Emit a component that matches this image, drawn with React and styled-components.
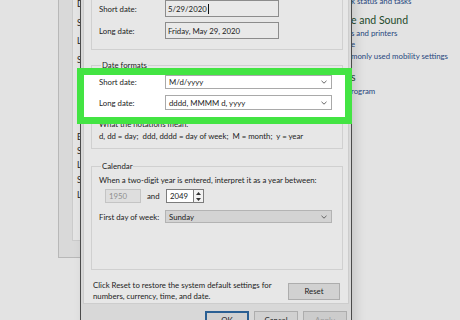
import React from "react";
import styled, { createGlobalStyle } from "styled-components";

const Global = createGlobalStyle`
  html, body { margin: 0; padding: 0; background: #e3e3e3; }
  #root { width: 460px; height: 320px; }
`;

const FONT = `Lato, "Open Sans", "Noto Sans", sans-serif`;

const Desktop = styled.div`
  position: relative;
  width: 460px;
  height: 320px;
  overflow: hidden;
  background: #e3e3e3;
  font-family: ${FONT};
  font-size: 7.8px;
  color: #1c1c1c;
`;

/* ---------- window behind, left (Region) ---------- */
const BackWindow = styled.div`
  position: absolute;
  left: 58px;
  top: -10px;
  width: 60px;
  height: 268px;
  background: #d9d9d9;
  border: 1px solid #b8b8b8;
  display: flex;
  padding-left: 13px;
  padding-bottom: 16px;
  box-sizing: border-box;
`;
const BackPanel = styled.div`
  flex: 1;
  background: #e5e5e5;
  border-left: 1px solid #cbcbcb;
  border-bottom: 1px solid #cbcbcb;
  padding: 8px 0 0 4px;
  display: flex;
  flex-direction: column;
  font-size: 8.5px;
`;
const BackLabel = styled.div`
  line-height: 11px;
  height: 11px;
  margin-bottom: ${(p) => p.$gap}px;
  white-space: nowrap;
`;

/* ---------- window behind, right (Control Panel) ---------- */
const CPanel = styled.div`
  position: absolute;
  left: 351px;
  top: -4px;
  display: flex;
  flex-direction: column;
  white-space: nowrap;
`;
const CPLink = styled.div`
  font-size: 7.8px;
  line-height: 11px;
  color: #27477e;
  margin-top: ${(p) => p.$mt || 0}px;
`;
const CPHead = styled.div`
  font-size: 10.5px;
  line-height: 16px;
  color: #234a2a;
  margin-top: ${(p) => p.$mt || 0}px;
`;

/* ---------- front dialog ---------- */
const Dialog = styled.div`
  position: absolute;
  left: 80px;
  top: -20px;
  width: 272px;
  height: 360px;
  box-sizing: border-box;
  z-index: 2;
  background: #d8d8d8;
  border-left: 1px solid #4b4b4b;
  border-right: 1px solid #4b4b4b;
  padding: 0 2px 0 2px;
  box-shadow: 4px 0 10px rgba(0, 0, 0, 0.12);
  display: flex;
  flex-direction: column;
`;

const TabPage = styled.div`
  background: #e7e7e7;
  border: 1px solid #cdcdcd;
  border-top: none;
  padding: 9px 5px 0 7px;
  height: 324px;
  box-sizing: border-box;
  display: flex;
  flex-direction: column;
`;

const Group = styled.fieldset`
  margin: ${(p) => p.$mt || 0}px 0 0 0;
  border: 1px solid #d0d0d0;
  padding: ${(p) => p.$pad};
  min-width: 0;
`;
const Legend = styled.legend`
  padding: 0 1px;
  margin-left: 2px;
  line-height: 10px;
`;

const FormatsBody = styled.div`
  position: relative;
`;

const Row = styled.div`
  position: relative;
  z-index: 1;
  display: flex;
  align-items: center;
  margin-top: ${(p) => p.$mt || 0}px;
`;
const Label = styled.div`
  width: 66px;
  flex: none;
  white-space: nowrap;
`;

const Field = styled.div`
  box-sizing: border-box;
  width: 114px;
  height: 17px;
  border: 1px solid #8c8c8c;
  background: #e9e9e9;
  padding-left: 2px;
  display: flex;
  align-items: center;
  white-space: nowrap;
`;
const Caret = styled.span`
  display: inline-block;
  width: 1px;
  height: 10px;
  background: #111;
  margin-left: 1px;
`;

const Combo = styled.div`
  box-sizing: border-box;
  width: 167px;
  height: ${(p) => p.$h}px;
  border: 1px solid ${(p) => (p.$gray ? "#b3b3b3" : "#a9a9a9")};
  background: ${(p) => (p.$gray ? "#d3d3d3" : "#ffffff")};
  padding: 0 4px 0 3px;
  display: flex;
  align-items: center;
  justify-content: space-between;
  white-space: nowrap;
`;

const Chevron = () => (
  <svg width="6" height="4" viewBox="0 0 6 4">
    <path d="M0.5 0.8 L3 3.2 L5.5 0.8" fill="none" stroke="#555" strokeWidth="0.9" />
  </svg>
);

const Highlight = styled.div`
  position: absolute;
  z-index: 0;
  left: -22px;
  top: -7px;
  width: 275px;
  height: 56px;
  box-sizing: border-box;
  border: 7px solid #43e443;
  background: #ffffff;
`;

const Text = styled.div`
  line-height: 12px;
  white-space: nowrap;
  margin-top: ${(p) => p.$mt || 0}px;
`;

const YearRow = styled.div`
  display: flex;
  align-items: center;
  margin-top: 3px;
  padding-left: 6px;
`;
const YearBox = styled.div`
  box-sizing: border-box;
  height: 14px;
  width: ${(p) => p.$w}px;
  border: 1px solid ${(p) => (p.$disabled ? "#c4c4c4" : "#7c7c7c")};
  background: ${(p) => (p.$disabled ? "#dedede" : "#ffffff")};
  color: ${(p) => (p.$disabled ? "#8f8f8f" : "#1c1c1c")};
  padding-left: 3px;
  display: flex;
  align-items: center;
`;
const And = styled.div`
  width: 25px;
  flex: none;
  padding-left: 6px;
  box-sizing: border-box;
`;
const Spinner = styled.div`
  box-sizing: border-box;
  width: 10px;
  height: 14px;
  border: 1px solid #7c7c7c;
  border-left: none;
  background: #f2f2f2;
  display: flex;
  flex-direction: column;
  align-items: center;
  justify-content: space-around;
`;

const Footer = styled.div`
  display: flex;
  align-items: center;
  justify-content: space-between;
  margin-top: 10px;
  padding: 0 3px 0 2px;
`;
const FooterText = styled.div`
  line-height: 11px;
`;
const Button = styled.div`
  box-sizing: border-box;
  width: ${(p) => p.$w}px;
  height: ${(p) => p.$h}px;
  border: ${(p) => (p.$focus ? "2px solid #2a5f93" : "1px solid #adadad")};
  background: ${(p) => (p.$disabled ? "#cccccc" : "#d1d1d1")};
  color: ${(p) => (p.$disabled ? "#9b9b9b" : "#1c1c1c")};
  display: flex;
  align-items: center;
  justify-content: center;
`;
const ButtonBar = styled.div`
  display: flex;
  justify-content: flex-end;
  gap: 5px;
  padding: 7px 2px 0 0;
`;

const backLabels = [
  ["Decimal symbol:", 8],
  ["Short date:", 7],
  ["Long date:", 8],
  ["Short time:", 8],
  ["Long time:", 8],
  ["First day:", 8],
  ["Examples", 9],
  ["Examples", 3],
  ["Short date:", 3],
  ["Long date:", 4],
  ["Short time:", 4],
  ["Long time:", 4],
];

export default function App() {
  return (
    <>
      <Global />
      <Desktop>
        <BackWindow>
          <BackPanel>
            {backLabels.map(([t, g], i) => (
              <BackLabel key={i} $gap={g}>{t}</BackLabel>
            ))}
          </BackPanel>
        </BackWindow>

        <CPanel>
          <CPLink>k status and tasks</CPLink>
          <CPHead $mt={5}>e and Sound</CPHead>
          <CPLink>s and printers</CPLink>
          <CPLink>e</CPLink>
          <CPLink $mt={1}>monly used mobility settings</CPLink>
          <CPHead $mt={7}>s</CPHead>
          <CPLink $mt={1}>rogram</CPLink>
        </CPanel>

        <Dialog>
          <TabPage>
            <Group $pad="10px 7px 10px 7px">
              <Row>
                <Label>Short date:</Label>
                <Field>
                  5/29/2020
                  <Caret />
                </Field>
              </Row>
              <Row $mt={5}>
                <Label>Long date:</Label>
                <Field>Friday, May 29, 2020</Field>
              </Row>
            </Group>

            <Group $mt={10} $pad="5px 7px 6px 7px">
              <Legend>Date formats</Legend>
              <FormatsBody>
                <Highlight />
                <Row>
                  <Label>Short date:</Label>
                  <Combo $h={14}>
                    M/d/yyyy
                    <Chevron />
                  </Combo>
                </Row>
                <Row $mt={6}>
                  <Label>Long date:</Label>
                  <Combo $h={15}>
                    dddd, MMMM d, yyyy
                    <Chevron />
                  </Combo>
                </Row>
                <Text $mt={8}>What the notations mean:</Text>
                <Text>d, dd = day;&nbsp; ddd, dddd = day of week;&nbsp; M = month;&nbsp; y = year</Text>
              </FormatsBody>
            </Group>

            <Group $mt={12} $pad="3px 7px 46px 7px">
              <Legend>Calendar</Legend>
              <Text>When a two-digit year is entered, interpret it as a year between:</Text>
              <YearRow>
                <YearBox $w={36} $disabled>1950</YearBox>
                <And>and</And>
                <YearBox $w={28}>2049</YearBox>
                <Spinner>
                  <svg width="5" height="3" viewBox="0 0 5 3">
                    <path d="M0 3 L2.5 0 L5 3 Z" fill="#333" />
                  </svg>
                  <svg width="5" height="3" viewBox="0 0 5 3">
                    <path d="M0 0 L2.5 3 L5 0 Z" fill="#333" />
                  </svg>
                </Spinner>
              </YearRow>
              <Row $mt={7}>
                <Label>First day of week:</Label>
                <Combo $h={13} $gray>
                  Sunday
                  <Chevron />
                </Combo>
              </Row>
            </Group>

            <Footer>
              <FooterText>
                Click Reset to restore the system default settings for
                <br />
                numbers, currency, time, and date.
              </FooterText>
              <Button $w={52} $h={17}>Reset</Button>
            </Footer>
          </TabPage>
          <ButtonBar>
            <Button $w={44} $h={18} $focus>OK</Button>
            <Button $w={44} $h={18}>Cancel</Button>
            <Button $w={44} $h={18} $disabled>Apply</Button>
          </ButtonBar>
        </Dialog>
      </Desktop>
    </>
  );
}
